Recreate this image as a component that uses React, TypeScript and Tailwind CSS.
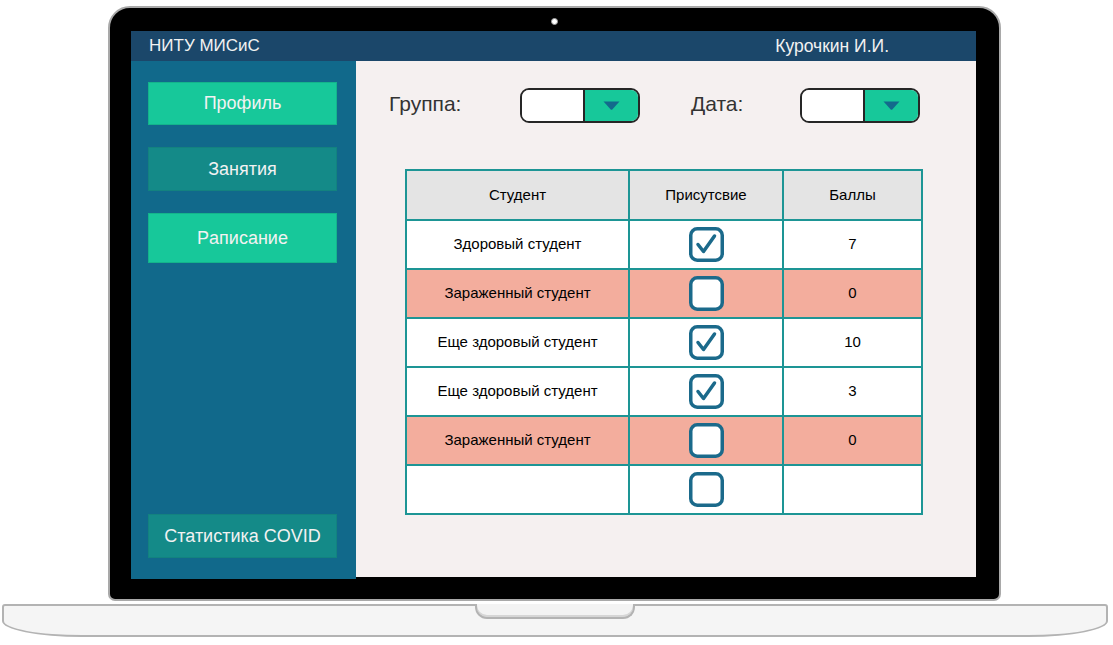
import { type FC } from 'react';

type Row = { name: string; present: boolean | null; score: string; sick: boolean };

const rows: Row[] = [
  { name: 'Здоровый студент', present: true, score: '7', sick: false },
  { name: 'Зараженный студент', present: false, score: '0', sick: true },
  { name: 'Еще здоровый студент', present: true, score: '10', sick: false },
  { name: 'Еще здоровый студент', present: true, score: '3', sick: false },
  { name: 'Зараженный студент', present: false, score: '0', sick: true },
  { name: '', present: false, score: '', sick: false },
];

const CheckBox: FC<{ checked: boolean }> = ({ checked }) => (
  <svg width="35" height="35" viewBox="0 0 35 35" fill="none">
    <rect x="1.75" y="1.75" width="31.5" height="31.5" rx="6.5" fill="#fff" stroke="#1b6a8b" strokeWidth="3.5" />
    {checked && (
      <path d="M9 17.5l5.5 7L25.5 9" stroke="#1b6a8b" strokeWidth="3.5" strokeLinecap="round" strokeLinejoin="round" />
    )}
  </svg>
);

const Select: FC = () => (
  <div className="flex w-[120px] h-[35px] rounded-[9px] border-2 border-[#262626] overflow-hidden">
    <div className="w-[63px] bg-white border-r-2 border-[#262626]" />
    <div className="flex-1 bg-[#17c89a] flex items-center justify-center">
      <svg width="17" height="9" viewBox="0 0 17 9">
        <path d="M0.5 0.5h16L9.5 8.2a1.4 1.4 0 0 1-2 0z" fill="#136a8c" />
      </svg>
    </div>
  </div>
);

const SideButton: FC<{ label: string; dark?: boolean; h: string }> = ({ label, dark, h }) => (
  <div
    className={`w-[189px] ${h} flex items-center justify-center text-[18px] text-[#f2f2f2] border ${
      dark ? 'bg-[#148a88] border-[#13827f]' : 'bg-[#17c89a] border-[#14b48b]'
    }`}
  >
    {label}
  </div>
);

const App: FC = () => {
  return (
    <div className="w-[1113px] h-[645px] bg-white flex flex-col items-start overflow-hidden font-['Liberation_Sans',Arial,sans-serif]">
      {/* Laptop lid */}
      <div className="ml-[108px] mt-[6px] w-[893px] h-[595px] bg-black border-2 border-[#a9a9a9] rounded-t-[22px] rounded-b-[7px] flex flex-col pt-[10px]">
        <div className="self-center w-[7px] h-[7px] rounded-full bg-white border border-[#9a9a9a]" />

        <div className="ml-[21px] mt-[6px] w-[845px] h-[548px] flex flex-col">
          {/* Top bar */}
          <div className="h-[30px] bg-[#1b476a] flex items-center justify-between pl-[18px] pr-[87px] text-[17px] text-[#f2f2f2]">
            <span>НИТУ МИСиС</span>
            <span className="text-[17.5px]">Курочкин И.И.</span>
          </div>

          <div className="flex-1 flex items-start">
            {/* Sidebar */}
            <div className="w-[225px] h-[518px] bg-[#11698b] flex flex-col pl-[17px] pt-[21px] pb-[21px]">
              <SideButton label="Профиль" h="h-[43px]" />
              <div className="mt-[22px]">
                <SideButton label="Занятия" dark h="h-[44px]" />
              </div>
              <div className="mt-[22px]">
                <SideButton label="Рaписание" h="h-[50px]" />
              </div>
              <div className="mt-auto">
                <SideButton label="Статистика COVID" dark h="h-[44px]" />
              </div>
            </div>

            {/* Content */}
            <div className="flex-1 h-[516px] bg-[#f5f0f0] pt-[27px] pl-[33px]">
              <div className="flex items-start text-[21px] text-[#333]">
                <span className="w-[131px]">Группа:</span>
                <Select />
                <span className="ml-[51px] w-[109px]">Дата:</span>
                <Select />
              </div>

              <div className="ml-[16px] mt-[46px] w-[518px] border-l-2 border-t-2 border-[#1d9595] grid grid-cols-[223px_154px_139px] text-[15px] text-black">
                {['Студент', 'Присутсвие', 'Баллы'].map((t) => (
                  <div key={t} className="h-[50px] bg-[#e4e4e4] border-r-2 border-b-2 border-[#1d9595] flex items-center justify-center">
                    {t}
                  </div>
                ))}
                {rows.map((r, i) => {
                  const bg = r.sick ? 'bg-[#f3ad9d]' : 'bg-white';
                  return [
                    <div key={`n${i}`} className={`h-[49px] ${bg} border-r-2 border-b-2 border-[#1d9595] flex items-center justify-center`}>
                      {r.name}
                    </div>,
                    <div key={`p${i}`} className={`h-[49px] ${bg} border-r-2 border-b-2 border-[#1d9595] flex items-center justify-center`}>
                      <CheckBox checked={!!r.present} />
                    </div>,
                    <div key={`s${i}`} className={`h-[49px] ${bg} border-r-2 border-b-2 border-[#1d9595] flex items-center justify-center`}>
                      {r.score}
                    </div>,
                  ];
                })}
              </div>
            </div>
          </div>
        </div>
      </div>

      {/* Laptop base */}
      <div className="ml-[2px] mt-[3px] w-[1106px] h-[33px] bg-[#f5f5f5] border-2 border-[#b3b3b3] rounded-t-[3px] rounded-bl-[80px_16px] rounded-br-[80px_16px] flex justify-center">
        <div className="w-[160px] h-[15px] -mt-[2px] bg-[#f3f3f3] border-2 border-t-0 border-[#b3b3b3] rounded-b-[12px] shadow-[inset_0_-2px_0_#d6d6d6]" />
      </div>
    </div>
  );
};

export default App;
